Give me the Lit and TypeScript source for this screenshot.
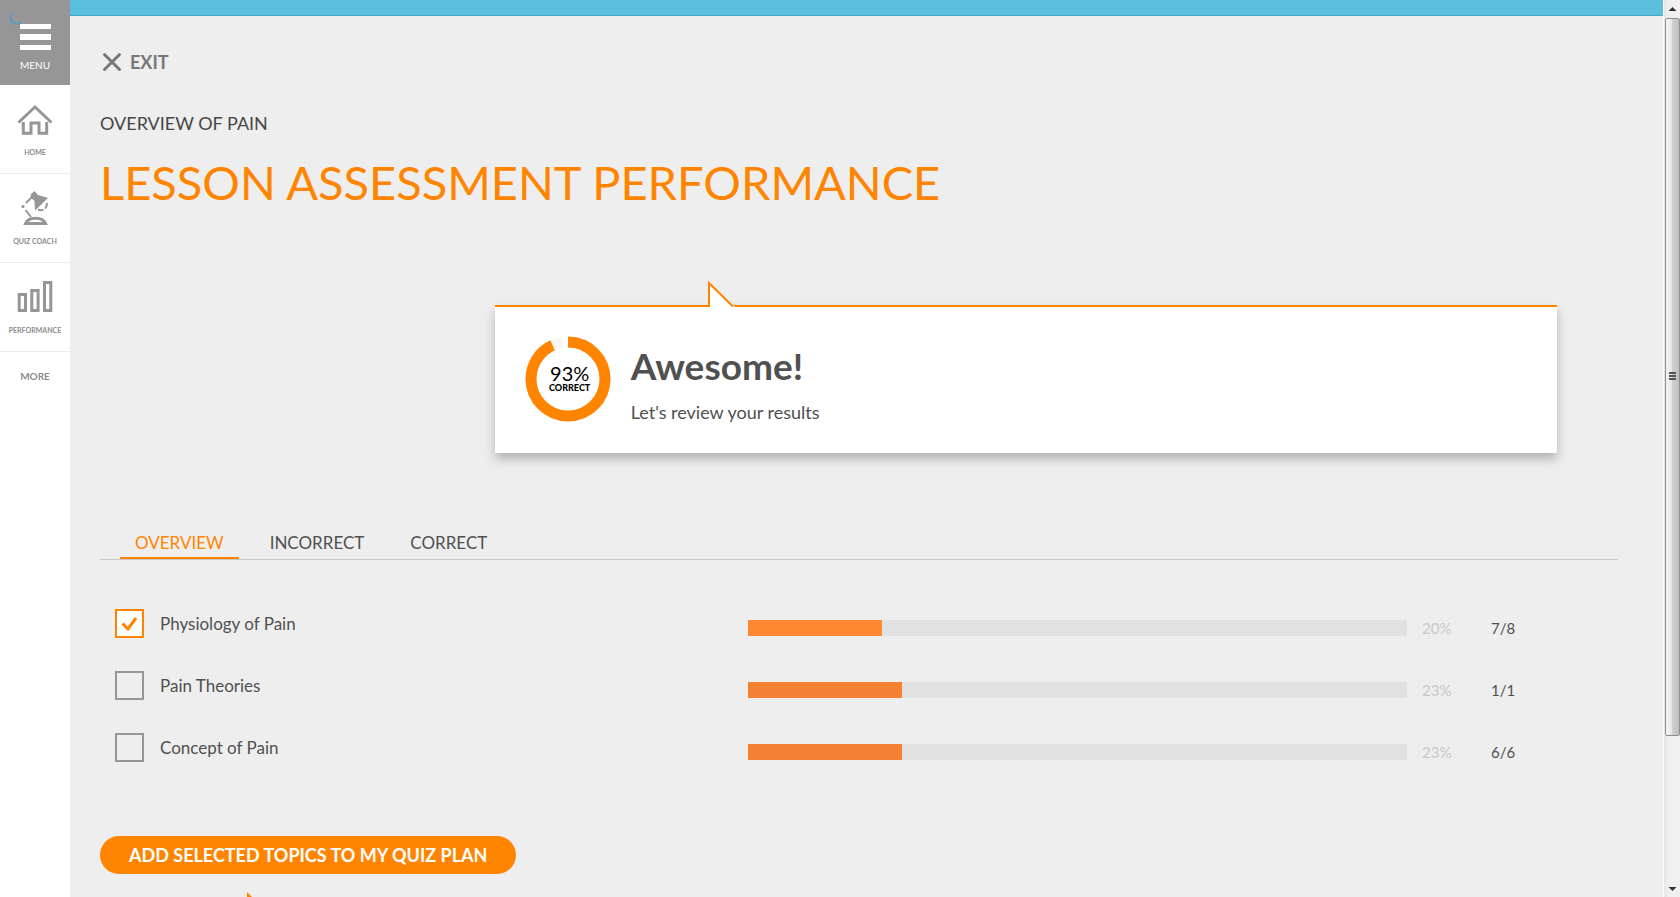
import { LitElement, html, css, svg } from "lit";
import { customElement, property, state } from "lit/decorators.js";
import { classMap } from "lit/directives/class-map.js";

interface Topic {
  name: string;
  percent: number;
  score: string;
  selected: boolean;
}

@customElement("nav-rail")
class NavRail extends LitElement {
  static styles = css`
    :host { display: block; background: #fff; color: #969696; }
    nav { display: flex; flex-direction: column; }
    button, a {
      display: flex; flex-direction: column; align-items: center;
      font-family: Lato, "Open Sans", sans-serif; text-decoration: none; text-transform: uppercase;
      box-sizing: border-box; width: 100%;
    }
    .menu {
      position: relative; height: 85px; padding: 23px 0 0; border: 0; gap: 6px;
      background: #969696; color: #fff; font-size: 10px; line-height: 16px;
    }
    .spinner { position: absolute; left: 9px; top: 11px; }
    .item {
      height: 89px; padding-top: 18px; gap: 7px; border-bottom: 1px solid #ededed;
      color: #8c8c8c; font-size: 7px; line-height: 12px; font-weight: 700;
    }
    .more { padding-top: 16px; color: #8c8c8c; font-size: 10px; line-height: 16px; font-weight: 700; }
    svg { display: block; overflow: visible; }
  `;

  render() {
    return html`
      <nav aria-label="Main">
        <button class="menu" type="button">
          <svg class="spinner" width="14" height="14" viewBox="0 0 14 14" fill="none" stroke="#5b9bc0" stroke-width="2">
            <path d="M3.500 2 A6 6 0 0 0 12 11" />
          </svg>
          <svg width="31" height="28" viewBox="0 0 31 28" fill="#fff">
            <rect y="1" width="31" height="5" /><rect y="11" width="31" height="6" /><rect y="22" width="31" height="5" />
          </svg>
          <span>Menu</span>
        </button>
        <a class="item" href="#home">
          <svg width="36" height="36" viewBox="0 0 36 36" fill="none" stroke="#969696" stroke-width="3">
            <path d="M1.500 19.500 L18 4 L34.500 19.500" />
            <path d="M6.300 19 V30.200 H14 V20 H22 V30.200 H29.700 V19" />
          </svg>
          <span>Home</span>
        </a>
        <a class="item" href="#quiz">
          <svg width="36" height="36" viewBox="0 0 36 36">
            <path d="M14 2 L17.500 -1 L21 3 L31 6 L18 18.500 L17.500 9 L13.500 5.500 Z" fill="#969696" />
            <g fill="none" stroke="#969696" stroke-width="2">
              <path d="M14.500 5.500 L9 11" /><path d="M8.500 18 L14 25" />
              <path d="M30 11 A7 7 0 0 1 28 16.500 M26.500 17.600 A7 7 0 0 1 21 17.500" />
              <path d="M8.500 31.500 H28.500 C25.500 24.500 11.500 24.500 8.500 31.500 Z" stroke-width="3" />
            </g>
            <circle cx="6" cy="14.500" r="1.600" fill="#969696" />
          </svg>
          <span>Quiz Coach</span>
        </a>
        <a class="item" href="#performance">
          <svg width="36" height="36" viewBox="0 0 36 36" fill="none" stroke="#969696" stroke-width="3">
            <rect x="2.200" y="13.500" width="6.300" height="16" /><rect x="14.800" y="9.500" width="6.300" height="20" /><rect x="27.500" y="1.500" width="6.300" height="28" />
          </svg>
          <span>Performance</span>
        </a>
        <a class="more" href="#more">More</a>
      </nav>
    `;
  }
}

@customElement("score-card")
class ScoreCard extends LitElement {
  @property({ type: Number }) score = 0;

  static styles = css`
    :host {
      position: relative; display: flex; align-items: flex-start; gap: 20px; box-sizing: border-box;
      padding: 29px 30px; border-top: 2px solid #ff8500; background: #fff;
      box-shadow: 0 6px 10px rgba(0, 0, 0, 0.25);
    }
    .pointer { position: absolute; left: 213px; top: -27px; }
    .donut { flex: none; display: grid; place-items: center; width: 86px; height: 86px; }
    .donut svg { grid-area: 1 / 1; }
    .value { grid-area: 1 / 1; padding-left: 4px; text-align: center; color: #000; }
    .number { display: block; font-size: 20px; line-height: 18px; }
    .caption { display: block; font-size: 9px; line-height: 12px; font-weight: 900; }
    h2 { margin: 8px 0 12px; font-size: 37px; line-height: 44px; font-weight: 700; color: #505050; }
    p { margin: 0; font-size: 18px; line-height: 24px; color: #505050; }
  `;

  render() {
    const r = 37;
    const length = 2 * Math.PI * r;
    return html`
      <svg class="pointer" width="27" height="28" viewBox="0 0 27 28" aria-hidden="true">
        <path d="M0 0 L27 27 V28 H0 Z" fill="#fff" />
        <path d="M0 0 L25 25 H0 Z" fill="#eee" />
        <path d="M1 3 L24 26 V28 H1 Z" fill="#fff" />
        <path d="M1 27 V3 L25 26.500" fill="none" stroke="#ff8500" stroke-width="2" />
      </svg>
      <div class="donut">
        <svg width="86" height="86" viewBox="0 0 86 86" fill="none" stroke-width="11" aria-hidden="true">
          <circle cx="43" cy="43" r=${r} stroke="#f7f6f2" stroke-dasharray="${length * 0.975} ${length}" transform="rotate(-90 43 43)" />
          <circle cx="43" cy="43" r=${r} stroke="#ff8500" stroke-dasharray="${(length * this.score) / 100} ${length}" transform="rotate(-90 43 43)" />
        </svg>
        <div class="value"><span class="number">${this.score}%</span><span class="caption">CORRECT</span></div>
      </div>
      <div>
        <h2>Awesome!</h2>
        <p>Let's review your results</p>
      </div>
    `;
  }
}

@customElement("topic-row")
class TopicRow extends LitElement {
  @property({ attribute: false }) topic!: Topic;

  static styles = css`
    :host {
      display: grid; grid-template-columns: minmax(0, 618fr) minmax(0, 659fr) 54px 127px; column-gap: 15px;
      align-items: start; font-size: 17px; line-height: 24px; color: #505050;
    }
    label { display: flex; align-items: center; gap: 16px; }
    input {
      appearance: none; flex: none; box-sizing: border-box; width: 29px; height: 29px; margin: 0;
      border: 2px solid #969696;
    }
    input:checked { border-color: #ff8500; background: #fff; }
    .box { display: grid; place-items: center; }
    .box > * { grid-area: 1 / 1; }
    .box svg { pointer-events: none; }
    .track { height: 16px; margin-top: 11px; background: #e1e1e1; }
    .fill { height: 100%; background: #f58233; }
    .fill.selected { background: #ff8833; }
    .percent, .score { margin-top: 7px; font-size: 15px; }
    .percent { color: #c8c8c8; }
  `;

  private toggle(e: Event) {
    this.topic = { ...this.topic, selected: (e.target as HTMLInputElement).checked };
  }

  render() {
    const { name, percent, score, selected } = this.topic;
    return html`
      <label>
        <span class="box">
          <input type="checkbox" .checked=${selected} @change=${this.toggle} />
          ${selected
            ? svg`<svg width="17" height="17" viewBox="0 0 17 17" fill="none" stroke="#ff8500" stroke-width="3"><path d="M1.500 8.500 L7 14 L15 3" /></svg>`
            : ""}
        </span>
        <span>${name}</span>
      </label>
      <div class="track"><div class=${classMap({ fill: true, selected })} style="width: ${percent * 1.016}%"></div></div>
      <span class="percent">${percent}%</span>
      <span class="score">${score}</span>
    `;
  }
}

@customElement("app-root")
class AppRoot extends LitElement {
  @state() private tab = "Overview";

  private topics: Topic[] = [
    { name: "Physiology of Pain", percent: 20, score: "7/8", selected: true },
    { name: "Pain Theories", percent: 23, score: "1/1", selected: false },
    { name: "Concept of Pain", percent: 23, score: "6/6", selected: false },
  ];

  static styles = css`
    :host {
      display: grid; grid-template-columns: 70px minmax(0, 1fr) 17px; height: 100vh; overflow: hidden;
      background: #eee; color: #505050; font-family: Lato, "Open Sans", sans-serif;
    }
    main { overflow: hidden; border-top: 15px solid #5bc0de; }
    .content { padding: 34px 45px 0 30px; border-top: 1px solid #46a5c3; }
    .exit {
      display: flex; align-items: center; gap: 8px; padding: 0 0 0 2px; border: 0; background: none;
      font: 700 18px/24px Lato, "Open Sans", sans-serif; color: #777;
    }
    .lesson { margin: 37px 0 19px; font-size: 18px; line-height: 24px; color: #464646; }
    h1 { margin: 0 0 95px; font-size: 47px; line-height: 56px; font-weight: 400; color: #ff8500; }
    score-card { width: 70%; margin: 0 4% 78px 26%; }
    .tabs { display: flex; gap: 16px; padding-left: 20px; margin-bottom: 49px; border-bottom: 1px solid #c8c8c8; }
    .tab {
      padding: 0 15px 2px; border: 0; border-bottom: 2px solid transparent; background: none;
      font: 17px/24px Lato, "Open Sans", sans-serif; text-transform: uppercase; color: #505050;
    }
    .tab.active { color: #ff8500; border-color: #ff8500; }
    .topics { display: grid; gap: 31px; padding-left: 15px; margin-bottom: 72px; }
    .add {
      display: block; height: 38px; padding: 0 29px; border: 0; border-radius: 19px; background: #ff8500;
      font: 700 18px/38px Lato, "Open Sans", sans-serif; color: #fff;
    }
    .hint { display: block; margin: 18px 0 0 147px; }
    .scrollbar {
      display: flex; flex-direction: column; align-items: center; padding: 0 1px; border-left: 1px solid #fafafa;
      box-sizing: border-box; background: linear-gradient(90deg, #e6e6e6, #f0f0f0 30%, #f0f0f0);
    }
    .scrollbar svg { display: block; flex: none; }
    .thumb {
      flex: none; display: grid; place-items: center; box-sizing: border-box; width: 15px; height: 80%;
      border: 1px solid #8e8e8e; border-radius: 2px;
      background: linear-gradient(90deg, #f5f5f5, #e6e6e7 45%, #cfcfd1 50%, #c0c0c4);
    }
    .rest { flex: 1; }
  `;

  render() {
    return html`
      <nav-rail></nav-rail>
      <main>
        <div class="content">
          <button class="exit" type="button">
            <svg width="20" height="20" viewBox="0 0 20 20" fill="none" stroke="#777" stroke-width="3" stroke-linecap="round" aria-hidden="true">
              <path d="M2.500 2.500 L17.500 17.500 M17.500 2.500 L2.500 17.500" />
            </svg>
            EXIT
          </button>
          <p class="lesson">OVERVIEW OF PAIN</p>
          <h1>LESSON ASSESSMENT PERFORMANCE</h1>
          <score-card .score=${93}></score-card>
          <div class="tabs" role="tablist">
            ${["Overview", "Incorrect", "Correct"].map(
              (name) => html`<button
                class=${classMap({ tab: true, active: this.tab === name })}
                type="button"
                role="tab"
                aria-selected=${this.tab === name}
                @click=${() => (this.tab = name)}
              >${name}</button>`
            )}
          </div>
          <div class="topics">${this.topics.map((topic) => html`<topic-row .topic=${topic}></topic-row>`)}</div>
          <button class="add" type="button">ADD SELECTED TOPICS TO MY QUIZ PLAN</button>
          <svg class="hint" width="25" height="25" viewBox="0 0 25 25" aria-hidden="true"><path d="M0 0 L25 25 H0 Z" fill="#ff8500" /></svg>
        </div>
      </main>
      <div class="scrollbar" aria-hidden="true">
        <svg width="15" height="18" viewBox="0 0 15 18"><path d="M3.500 11 L7.500 7 L11.500 11 Z" fill="#333" /></svg>
        <div class="thumb">
          <svg width="7" height="9" viewBox="0 0 7 9" fill="#555"><rect y="0" width="7" height="2" /><rect y="3" width="7" height="2" /><rect y="6" width="7" height="2" /></svg>
        </div>
        <div class="rest"></div>
        <svg width="15" height="18" viewBox="0 0 15 18"><path d="M3.500 8 L7.500 12 L11.500 8 Z" fill="#333" /></svg>
      </div>
    `;
  }
}
